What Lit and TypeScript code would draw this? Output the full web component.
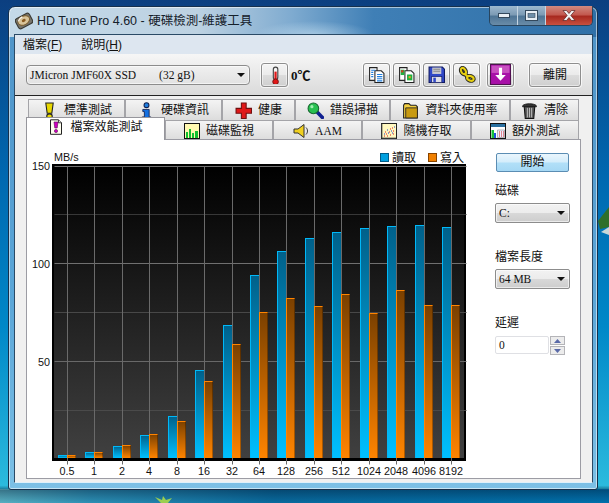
import { LitElement, html, css, svg } from "lit";
import { customElement } from "lit/decorators.js";

const icons: Record<string, any> = {
  warn: svg`<path d="M4.500 1h7l-1.300 9.500H5.800z" fill="#e8d800" stroke="#222" stroke-width="1"/><ellipse cx="8" cy="13.300" rx="2.600" ry="2.100" fill="#e8d800" stroke="#222"/>`,
  info: svg`<circle cx="8" cy="3" r="2.300" fill="#1d7fe0" stroke="#102050"/><path d="M4.500 7h6v7h1.500v2H4v-2h2V9H4.500z" fill="#1470e0" stroke="#102050" stroke-width=".8"/>`,
  plus: svg`<path d="M6 1h4.500v5H15.500v4.500H10.500v5H6v-5H1V6h5z" fill="#e01818" stroke="#701010"/>`,
  zoom: svg`<path d="M9 9l5.500 5.500" stroke="#102090" stroke-width="3.400" stroke-linecap="round"/><circle cx="6" cy="6" r="5" fill="#28c050" stroke="#186830"/><circle cx="4.600" cy="4.400" r="1.500" fill="#a0f0b0"/>`,
  folder: svg`<path d="M1.500 15V3l1-1.500h4L8 3h5l1.500 1.500V15z" fill="#f4d040" stroke="#222"/><path d="M3.500 15V5.500h11V15z" fill="#c89a10" stroke="#222" stroke-width=".8"/>`,
  trash: svg`<path d="M3 4h10l-1 11.500H4z" fill="#555" stroke="#111"/><path d="M1.500 3.500c2-2.500 11-2.500 13 0v1h-13z" fill="#333" stroke="#111" stroke-width=".7"/><path d="M6 5.500v9M8 5.500v9M10 5.500v9" stroke="#ccc" stroke-width=".8"/>`,
  file: svg`<path d="M2.500 .8h8l3 3v11.500h-11z" fill="#fffff0" stroke="#222"/><path d="M10.500 .8v3h3" fill="#ddd" stroke="#222" stroke-width=".8"/><path d="M6 3h4l-.8 6H6.800z" fill="#d000c0" stroke="#501050" stroke-width=".6"/><circle cx="8" cy="12" r="1.600" fill="#d000c0" stroke="#501050" stroke-width=".6"/>`,
  monitor: svg`<rect x=".5" y=".5" width="15" height="15" fill="#fff8b0" stroke="#111"/><path d="M2 15V9h2v6zM5 15V6h2v9zM8 15v-5h2v5zM11 15V8h3v7z" fill="#10c030"/>`,
  aam: svg`<path d="M1 6h4l6-4.500v13L5 10H1z" fill="#f0d020" stroke="#333"/><path d="M13 4.500c2 2 2 5 0 7" fill="none" stroke="#333"/>`,
  random: svg`<rect x=".5" y=".5" width="15" height="15" fill="#fff8c0" stroke="#222"/><path d="M3 13h1M5 11h1M6 13h1M8 9h1M9 12h1M11 5h1M12 8h1M9 6h1M4 9h1M12 11h1" stroke="#e01818"/><path d="M3 11h1M7 10h1M10 8h1M13 4h1M6 7h1M11 10h1" stroke="#2040d0"/><path d="M1 15h14M1 1v14" stroke="#555" stroke-width=".8"/>`,
  extra: svg`<rect x=".5" y=".5" width="15" height="15" fill="#fff" stroke="#111"/><rect x="1" y="1" width="14" height="3" fill="#2a70a0"/><path d="M1.500 15V7H4v8z" fill="#18c038"/><path d="M4 15v-5h2v5z" fill="#2050e0"/><path d="M7.500 7h7v7.500h-7z" fill="#eef" stroke="#888" stroke-width=".6"/><path d="M9 9h1M11 9h1M13 9h1M9 11h1M11 11h1M13 11h1M9 13h1M11 13h1M13 13h1" stroke="#d02020"/>`,
  hdd: svg`<g transform="rotate(-28 8 8)"><rect x="1" y="3" width="14" height="10" rx="2.500" fill="#77756c" stroke="#3a3a34"/><ellipse cx="8" cy="7.500" rx="5.500" ry="3.800" fill="#d8c49a" stroke="#7a5a28" stroke-width=".8"/><ellipse cx="8" cy="7.500" rx="1.800" ry="1.300" fill="#8a5a20"/><path d="M3.500 6c1-1.500 3-2 5-2" stroke="#fff" fill="none" stroke-width=".8"/></g>`,
  thermo: svg`<rect x="6.500" y="1" width="4" height="11" rx="2" fill="#f4f4f4" stroke="#444"/><rect x="7.500" y="5" width="2" height="8" fill="#e01818"/><circle cx="8.500" cy="14" r="2.500" fill="#e01818" stroke="#701010" stroke-width=".8"/>`,
  copyText: svg`<path d="M1.500 1.500h7v12h-7z" fill="#fff" stroke="#222"/><path d="M6.500 4.500h6l2.500 2.500v8.500h-8.500z" fill="#fff" stroke="#222"/><path d="M3 4h4M3 6h2M3 8h2M3 10h2M8.500 8h5M8.500 10h5M8.500 12h5M8.500 14h5" stroke="#2080e0"/>`,
  copyImage: svg`<path d="M1.500 1.500h7v12h-7z" fill="#fff" stroke="#222"/><path d="M6.500 4.500h6l2.500 2.500v8.500h-8.500z" fill="#fff" stroke="#222"/><rect x="2.500" y="3.500" width="3.500" height="5" fill="#20b040"/><rect x="3" y="4" width="2" height="2" fill="#e03020"/><rect x="8.500" y="8" width="5" height="5.500" fill="#20b040"/><rect x="10" y="9.500" width="2" height="2" fill="#e8a020"/>`,
  save: svg`<path d="M1 1h12.500L15.500 3v12.500H1z" fill="#3048c8" stroke="#111a60"/><rect x="4" y="1.500" width="8.500" height="6" fill="#c8c8d0"/><path d="M5 3h6.500M5 5h6.500" stroke="#888"/><rect x="3.500" y="10" width="9.500" height="5.500" fill="#e0e0e8" stroke="#111a60" stroke-width=".6"/><rect x="5" y="11" width="2.400" height="4" fill="#3048c8"/>`,
  chain: svg`<g fill="none" stroke="#2a2a20" stroke-width="3.600"><ellipse cx="4.800" cy="4.500" rx="1.900" ry="3" transform="rotate(-30 4.800 4.500)"/><ellipse cx="11" cy="11" rx="3" ry="2" transform="rotate(20 11 11)"/><path d="M5.500 6.500L9 10"/></g><g fill="none" stroke="#e8d010" stroke-width="1.800"><ellipse cx="4.800" cy="4.500" rx="1.900" ry="3" transform="rotate(-30 4.800 4.500)"/><ellipse cx="11" cy="11" rx="3" ry="2" transform="rotate(20 11 11)"/><path d="M5.500 6.500L9 10"/></g>`,
  down: svg`<rect x=".5" y=".5" width="19" height="19" fill="#a810a8" stroke="#501050"/><rect x="1.500" y="1.500" width="17" height="7" fill="#c850c0"/><path d="M8.500 3.500h3v7h3.500L10 16l-5-5.500h3.500z" fill="#fff"/>`,
};
const ico = (n: string, s = 16) =>
  html`<svg class="ico" width=${s} height=${s} viewBox=${n === "down" ? "0 0 20 20" : "0 0 16 16"}>${icons[n]}</svg>`;

const row1 = [
  ["warn", "標準測試"], ["info", "硬碟資訊"], ["plus", "健康"],
  ["zoom", "錯誤掃描"], ["folder", "資料夾使用率"], ["trash", "清除"],
];
const row2 = [
  ["file", "檔案效能測試"], ["monitor", "磁碟監視"], ["aam", "AAM"],
  ["random", "隨機存取"], ["extra", "額外測試"],
];

/* [label, read bar top y, write bar top y], in picture rows of the plot */
const data: [string, number, number][] = [
  ["0.5", 455, 455], ["1", 452, 452], ["2", 446, 445], ["4", 435, 434], ["8", 416, 421],
  ["16", 370, 381], ["32", 325, 344], ["64", 275, 312], ["128", 251, 298], ["256", 238, 306],
  ["512", 232, 294], ["1024", 228, 313], ["2048", 226, 290], ["4096", 225, 305], ["8192", 227, 305],
];
const OX = 27, OY = 140;
const tickX = (i: number) => 67 + Math.round(i * 27.43);

function chart() {
  const x = (v: number) => v - OX + 0.5;
  const y = (v: number) => v - OY + 0.5;
  const hLines = [
    [166, "#707070"], [214, "#383838"], [263, "#707070"], [312, "#484848"], [361, "#686868"], [410, "#4a4a4a"],
  ] as [number, string][];
  return svg`
    <defs>
      <linearGradient id="bg" x1="0" y1="0" x2="0" y2="1"><stop offset="0" stop-color="#000"/><stop offset="1" stop-color="#404040"/></linearGradient>
      <linearGradient id="b" x1="0" y1="0" x2="0" y2="1"><stop offset="0" stop-color="#00608a"/><stop offset="1" stop-color="#00c0ff"/></linearGradient>
      <linearGradient id="o" x1="0" y1="0" x2="0" y2="1"><stop offset="0" stop-color="#7a4000"/><stop offset="1" stop-color="#ff8400"/></linearGradient>
    </defs>
    <rect x=${52 - OX} y=${164 - OY} width="414" height="297" fill="#000"/>
    <rect x=${54 - OX} y=${166 - OY} width="410" height="292" fill="url(#bg)"/>
    ${hLines.map(([v, c]) => svg`<path d="M${x(54)} ${y(v)}H${x(466)}" stroke=${c}/>`)}
    ${data.map((_, i) => svg`<path d="M${x(tickX(i))} ${y(166)}V${y(464)}" stroke="#6a6a6a"/>`)}
    ${data.map((d, i) => {
      const t = tickX(i);
      return svg`
        <rect x=${t - 9 - OX} y=${d[1] - OY} width="9" height=${458 - d[1]} fill="url(#b)"/>
        <rect x=${t - 9 - OX} y=${d[1] - OY} width="9" height="1" fill="#00b8f8"/>
        <rect x=${t - 9 - OX} y=${d[1] - OY} width="1" height=${458 - d[1]} fill="#00b8f8"/>
        <rect x=${t + 1 - OX} y=${d[2] - OY} width="8" height=${458 - d[2]} fill="url(#o)"/>
        <rect x=${t + 1 - OX} y=${d[2] - OY} width="8" height="1" fill="#ff8400"/>
        <rect x=${t - OX} y=${d[2] - OY} width="1" height=${458 - d[2]} fill="#ff8400"/>
        <rect x=${t + 8 - OX} y=${d[2] - OY} width="1" height=${458 - d[2]} fill="#000" opacity=".3"/>`;
    })}
    <g class="ax">
      <text x=${54 - OX} y=${161 - OY}>MB/s</text>
      <text x=${50 - OX} y=${170 - OY} text-anchor="end">150</text>
      <text x=${50 - OX} y=${268 - OY} text-anchor="end">100</text>
      <text x=${50 - OX} y=${366 - OY} text-anchor="end">50</text>
      ${data.map((d, i) => svg`<text x=${tickX(i) - OX} y=${475 - OY} text-anchor="middle">${d[0]}</text>`)}
    </g>
    <rect x=${380.500 - OX} y=${153.500 - OY} width="8" height="8" fill="#00a0e0" stroke="#005c88" stroke-width="1"/>
    <text class="cj" x=${392 - OX} y=${162 - OY}>讀取</text>
    <rect x=${428.500 - OX} y=${153.500 - OY} width="8" height="8" fill="#f08000" stroke="#884400" stroke-width="1"/>
    <text class="cj" x=${440 - OX} y=${162 - OY}>寫入</text>
  `;
}

const arrow = html`<svg class="arrow" width="8" height="4" viewBox="0 0 8 4"><path d="M0 0h8L4 4z" fill="#111"/></svg>`;

@customElement("app-root")
export class AppRoot extends LitElement {
  static styles = css`
    :host {
      display: block;
      width: 609px;
      height: 503px;
      overflow: hidden;
      box-sizing: border-box;
      padding: 6px 11px 13px 8px;
      position: relative;
      font: 12px/16px "Liberation Sans", "Noto Sans CJK TC", sans-serif;
      color: #111;
      background:
        linear-gradient(180deg, transparent 96.500%, rgba(0, 30, 60, 0.55) 97.500%, rgba(0, 60, 100, 0.3) 100%),
        linear-gradient(90deg, #7fe2ea 0%, #3fb4d8 15%, #0d80b8 45%, #0088cc 100%) bottom/100% 14px no-repeat,
        linear-gradient(180deg, #0c3f80 0%, #0068b0 35%, #0088c8 65%, #30c0e0 100%);
    }
    .leaf { position: absolute; left: 153px; bottom: 0; }
    .leaf2 { position: absolute; left: 598px; top: 207px; }
    .win {
      height: 484px;
      width: 590px;
      box-sizing: border-box;
      border-radius: 7px 7px 3px 3px;
      border: 1px solid #16304c;
      box-shadow: inset 0 0 0 1px rgba(255, 255, 255, 0.55);
      background:
        radial-gradient(60px 14px at 305px 28px, rgba(220, 240, 250, 0.5), transparent) top/100% 30px no-repeat,
        linear-gradient(90deg, #c4d9e8 0%, #bdd2e2 32%, #7fabd0 48%, #3f7fb6 62%, #2f70a8 100%) top/100% 30px no-repeat,
        linear-gradient(180deg, #4d93c8 0%, #5ba6d8 60%, #7cc0e6 100%);
      display: flex;
      flex-direction: column;
      position: relative;
    }
    .title {
      height: 27px;
      flex: none;
      display: flex;
      align-items: center;
      padding-left: 6px;
      gap: 4px;
      font-size: 12.500px;
      color: #14202a;
      white-space: nowrap;
    }
    .ctrl {
      position: absolute;
      right: 4px;
      top: -1px;
      display: flex;
      height: 19px;
      border: 1px solid #28455f;
      border-top: none;
      border-radius: 0 0 5px 5px;
      overflow: hidden;
    }
    .ctrl div {
      display: flex;
      align-items: center;
      justify-content: center;
      width: 27px;
      background: linear-gradient(180deg, #9db8cf, #7d9bb5 45%, #4f7596 55%, #6a8ca8);
      border-right: 1px solid #c4d4e2;
    }
    .ctrl .close {
      width: 46px;
      border: none;
      background: linear-gradient(180deg, #d08a80, #c35a50 45%, #a82a20 55%, #c8503f);
    }
    .client {
      flex: none;
      margin: 0 4px 0 5px;
      height: 449px;
      border: 1px solid #2a4a66;
      border-bottom-color: #dff0fa;
      box-sizing: border-box;
      background: #f0f0f0;
      display: flex;
      flex-direction: column;
    }
    .menu {
      height: 19px;
      flex: none;
      display: flex;
      align-items: center;
      gap: 19px;
      padding-left: 8px;
      background: #dde6f0;
    }
    .menu u { text-decoration: underline; }
    .tool {
      height: 41px;
      flex: none;
      display: flex;
      align-items: center;
      padding: 0 0 0 11px;
      border-bottom: 1px solid #222;
      background: linear-gradient(180deg, #f6f6f6, #dadada);
    }
    .sel {
      box-sizing: border-box;
      display: flex;
      align-items: center;
      justify-content: space-between;
      border: 1px solid #8c8c8c;
      border-radius: 2px;
      height: 20px;
      padding: 0 4px 0 3px;
      background: linear-gradient(180deg, #f2f2f2 0%, #ececec 48%, #d8d8d8 52%, #cdcdcd 100%);
      box-shadow: inset 0 0 0 1px rgba(255, 255, 255, 0.6);
    }
    .serif { font-family: "Liberation Serif", "Noto Sans CJK TC", serif; font-size: 11.500px; white-space: pre; }
    .device { width: 224px; border-radius: 4px; background: linear-gradient(180deg, #f0f0f0, #e2e2e2); }
    .tb {
      box-sizing: border-box;
      width: 27px;
      height: 24px;
      flex: none;
      display: flex;
      align-items: center;
      justify-content: center;
      border: 1px solid #8e8e8e;
      border-radius: 3px;
      background: linear-gradient(180deg, #f4f4f4 0%, #ebebeb 48%, #dcdcdc 52%, #cfcfcf 100%);
      box-shadow: 0 0 0 1px rgba(255, 255, 255, 0.7), inset 0 0 0 1px rgba(255, 255, 255, 0.5);
      margin-right: 3px;
    }
    .therm { margin-left: 11px; margin-right: 3px; }
    .temp { font: bold 13px "Liberation Serif", "Noto Sans CJK TC", serif; width: 72px; flex: none; white-space: nowrap; }
    .gap { margin-right: 7px; }
    .leave { width: 52px; margin-left: 12px; margin-right: 0; }
    .tabs { flex: none; padding: 3px 0 0 11px; display: flex; flex-direction: column; }
    .r1, .r2 { display: grid; }
    .r1 { grid-template-columns: 97px 97px 73px 95px 120px 69px; margin-left: 2px; height: 21px; }
    .r2 { grid-template-columns: 139px 108px 89px 109px 108px; height: 20px; }
    .tab {
      display: flex;
      align-items: center;
      justify-content: center;
      gap: 6px;
      box-sizing: border-box;
      border: 1px solid #a4a4a8;
      border-bottom: none;
      background: linear-gradient(180deg, #f4f4f4, #dcdcdc);
      white-space: nowrap;
    }
    .tab.on {
      background: #fff;
      border-color: #96969c;
      height: 23px;
      margin-top: -3px;
      padding-bottom: 4px;
      position: relative;
      z-index: 1;
    }
    .panel {
      flex: none;
      margin-left: 11px;
      width: 555px;
      height: 340px;
      box-sizing: border-box;
      border: 1px solid #9c9ca4;
      background: #fff;
      display: flex;
      margin-top: -1px;
      position: relative;
    }
    .panel svg.plot { flex: none; display: block; }
    .ax { font: 10.800px "Liberation Sans", sans-serif; fill: #111; }
    .cj { font: 12px "Noto Sans CJK TC", sans-serif; fill: #111; }
    .side { display: flex; flex-direction: column; padding: 13px 0 0 4px; width: 75px; }
    .start {
      box-sizing: border-box;
      width: 73px;
      height: 19px;
      margin-left: 1px;
      border: 1px solid #5b8db3;
      border-radius: 2px;
      text-align: center;
      line-height: 16px;
      background: linear-gradient(180deg, #eaf6fd 0%, #d4edfb 48%, #b2e0f8 52%, #a6d8f4 100%);
    }
    .lbl { margin-top: 11px; margin-bottom: 4px; height: 16px; }
    .side .sel { width: 75px; margin-bottom: 15px; }
    .spin { display: flex; gap: 1px; margin-top: 1px; }
    .input {
      box-sizing: border-box;
      width: 54px;
      height: 18px;
      border: 1px solid #dfe0e4;
      border-radius: 2px;
      padding: 0 3px;
      line-height: 16px;
      background: #fff;
    }
    .btns { display: flex; flex-direction: column; gap: 1px; }
    .btns div {
      box-sizing: border-box;
      width: 15px;
      height: 9px;
      display: flex;
      align-items: center;
      justify-content: center;
      border: 1px solid #b4b4b8;
      background: #ececec;
    }
  `;

  render() {
    return html`
      <svg class="leaf" width="22" height="7" viewBox="0 0 22 7"><path d="M8 7L2 1l7 3L10 0l3 4 6-2-4 5z" fill="#9ccf50"/></svg>
      <svg class="leaf2" width="11" height="34" viewBox="0 0 11 34"><path d="M11 0L0 14l2 8 9-2z" fill="#2f6f2a"/><path d="M11 20L3 25l8 3z" fill="#c8d8d8"/></svg>
      <div class="win">
        <div class="title">${ico("hdd", 18)}<span>HD Tune Pro 4.60 - 硬碟檢測-維護工具</span></div>
        <div class="ctrl">
          <div><svg width="12" height="5" viewBox="0 0 12 5"><rect x=".5" y=".5" width="11" height="4" fill="#e8eef4" stroke="#33485c"/></svg></div>
          <div><svg width="13" height="11" viewBox="0 0 13 11"><rect x=".5" y=".5" width="12" height="10" fill="#e8eef4" stroke="#33485c"/><rect x="3" y="3.500" width="7" height="4" fill="#6f8ea8" stroke="#33485c" stroke-width=".6"/></svg></div>
          <div class="close"><svg width="14" height="11" viewBox="0 0 14 11"><path d="M1 .5h3.500L7 3.500 9.500.5H13L8.800 5.500 13 10.500H9.500L7 7.500 4.500 10.500H1L5.200 5.500z" fill="#f2f2f2" stroke="#5a2020" stroke-width=".7"/></svg></div>
        </div>
        <div class="client">
          <div class="menu">
            <span>檔案(<u>F</u>)</span><span>說明(<u>H</u>)</span>
          </div>
          <div class="tool">
            <div class="sel device"><span class="serif">JMicron JMF60X SSD        (32 gB)</span>${arrow}</div>
            <div class="tb therm">${ico("thermo", 18)}</div>
            <div class="temp">0℃</div>
            <div class="tb">${ico("copyText", 17)}</div>
            <div class="tb">${ico("copyImage", 17)}</div>
            <div class="tb">${ico("save", 17)}</div>
            <div class="tb gap">${ico("chain", 18)}</div>
            <div class="tb">${ico("down", 21)}</div>
            <div class="tb leave">離開</div>
          </div>
          <div class="tabs">
            <div class="r1">
              ${row1.map(([i, t]) => html`<div class="tab">${ico(i, 17)}<span>${t}</span></div>`)}
            </div>
            <div class="r2">
              ${row2.map(([i, t], n) => html`<div class="tab ${n === 0 ? "on" : ""}">${ico(i)}<span class=${t === "AAM" ? "serif" : ""}>${t}</span></div>`)}
            </div>
          </div>
          <div class="panel">
            <svg class="plot" width="464" height="338" viewBox="0 0 464 338">${chart()}</svg>
            <div class="side">
              <div class="start">開始</div>
              <div class="lbl">磁碟</div>
              <div class="sel"><span class="serif">C:</span>${arrow}</div>
              <div class="lbl">檔案長度</div>
              <div class="sel"><span class="serif">64 MB</span>${arrow}</div>
              <div class="lbl">延遲</div>
              <div class="spin">
                <div class="input serif">0</div>
                <div class="btns">
                  <div><svg width="7" height="4" viewBox="0 0 7 4"><path d="M3.500 0L7 4H0z" fill="#5a6aa8"/></svg></div>
                  <div><svg width="7" height="4" viewBox="0 0 7 4"><path d="M0 0h7L3.500 4z" fill="#5a6aa8"/></svg></div>
                </div>
              </div>
            </div>
          </div>
        </div>
      </div>
    `;
  }
}
